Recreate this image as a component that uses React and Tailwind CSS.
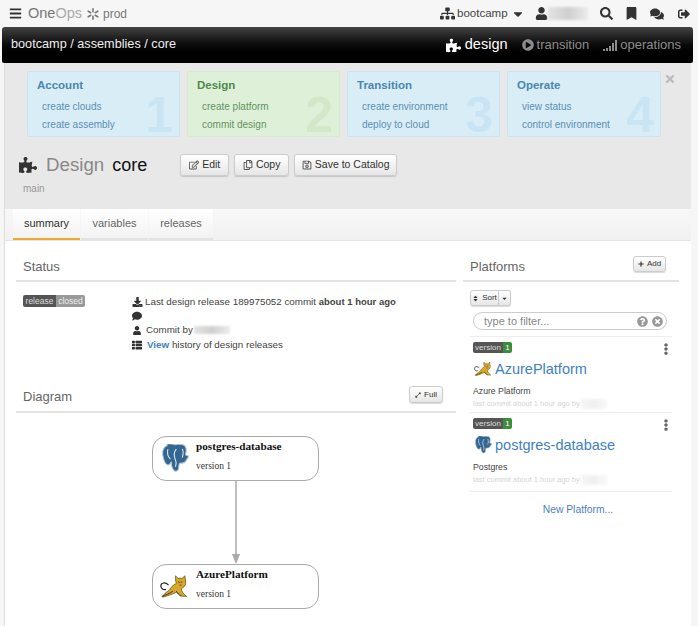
import {
  FaBars, FaSitemap, FaCaretDown, FaUser, FaSearch, FaBookmark, FaComments, FaSignOutAlt,
  FaPuzzlePiece, FaPlayCircle, FaTimes, FaRegEdit, FaRegCopy, FaRegSave, FaDownload, FaComment,
  FaThList, FaPlus, FaSort, FaExpandAlt, FaTimesCircle, FaQuestionCircle, FaEllipsisV,
} from "react-icons/fa";

const steps = [
  { title: "Account", num: "1", links: ["create clouds", "create assembly"], x: "w-[153px]" },
  { title: "Design", num: "2", links: ["create platform", "commit design"], green: true, x: "w-[153px]" },
  { title: "Transition", num: "3", links: ["create environment", "deploy to cloud"], x: "w-[153px]" },
  { title: "Operate", num: "4", links: ["view status", "control environment"], x: "w-[154px]" },
];

function Blur({ className = "" }) {
  return (
    <span className={`inline-block bg-gradient-to-r from-[#e4e4e4] via-[#cfcfcf] to-[#ececec] blur-[1px] ${className}`} />
  );
}

function Signal() {
  return (
    <svg width="15" height="12" viewBox="0 0 15 12" fill="currentColor">
      <rect x="0" y="10" width="2" height="2" />
      <rect x="3" y="9" width="2" height="3" />
      <rect x="6" y="7" width="2" height="5" />
      <rect x="9" y="4" width="2" height="8" />
      <rect x="12" y="1" width="2" height="11" />
    </svg>
  );
}

function Spinner() {
  return (
    <svg width="12" height="12" viewBox="0 0 12 12" stroke="#777" strokeWidth="1.6" strokeLinecap="round">
      <path d="M6 .8v3M6 8.2v3M1.2 3.2l2.6 1.5M8.2 7.3l2.6 1.5M1.2 8.8l2.6-1.5M8.2 4.7l2.6-1.5" />
    </svg>
  );
}

function Elephant({ size = 18 }) {
  return (
    <svg width={size} height={size * 1.06} viewBox="0 0 32 34">
      <path d="M6 2C2 3 0 8 1 14c1 6 3 10 6 11 2 0 3-2 4-4 0 4 1 9 4 11 3 1 5-1 5-5 0-2 0-3 1-4 3 0 7-1 8-4 1-2 3-3 2-5-2 0-3 0-3-2 1-4 2-9-3-11-4-1-7-1-9 0-3-1-7-2-10-1z" fill="#336791" stroke="#b9c6d2" strokeWidth="1.2" />
      <path d="M7 6c-1 4 0 9 3 12M17 6c-3 3-3 8-1 13 1 2 1 5 0 8M24 6c2 3 1 7 0 10" fill="none" stroke="#dfe7ee" strokeWidth="1.3" />
    </svg>
  );
}

function Tomcat({ size = 20 }) {
  return (
    <svg width={size} height={size * 0.8} viewBox="0 0 35 28">
      <path d="M10 13C6 9 1 10 1 14c0 3 3 5 6 4" fill="none" stroke="#222" strokeWidth="1.4" />
      <path d="M18 2l3 3h5l3-3 1 8c0 4-3 6-5 7 0 3 2 6 6 9h-5c-3-2-5-4-7-5-3 2-8 4-16 6 1-3 4-6 8-8 1-3 4-6 8-8-1-3-1-6-1-9z" fill="#d9a72a" stroke="#5a4310" strokeWidth="0.8" />
      <path d="M2 26c4-1 9-3 13-6M25 26c-3-1-5-4-6-6" fill="none" stroke="#222" strokeWidth="1" />
      <path d="M21 9l2 1M26 9l-2 1M23 13h2" fill="none" stroke="#333" strokeWidth="1" />
    </svg>
  );
}

function Btn({ icon, children, className = "" }) {
  return (
    <button className={`flex items-center justify-center gap-[3px] rounded-[3px] border border-[#ccc] bg-gradient-to-b from-white to-[#e6e6e6] text-[#333] shadow-[0_1px_1px_rgba(0,0,0,0.15)] ${className}`}>
      {icon}
      {children}
    </button>
  );
}

function Heading({ children, action }) {
  return (
    <div className="flex h-[34px] items-center justify-between border-b-2 border-[#e3e3e3] pr-[13px] pl-[7px] text-[13px] leading-none text-[#666]">
      <span className="pt-[4px]">{children}</span>
      {action}
    </div>
  );
}

function Platform({ icon, name, desc, className = "h-[71px]" }) {
  return (
    <div className={`relative border-b border-[#eee] pl-[3px] ${className}`}>
      <div className="flex h-[11px] w-[39px] overflow-hidden rounded-[2px] text-[8px] leading-[11px] text-[#ddd]">
        <span className="w-[30px] bg-[#555] text-center">version</span>
        <span className="flex-1 bg-[#3d8b3d] text-center text-white">1</span>
      </div>
      <FaEllipsisV className="absolute top-[1px] right-0 text-[12px] text-[#666]" />
      <div className="mt-[6px] flex h-[20px] items-center gap-[2px]">
        <span className="flex w-[20px] justify-center">{icon}</span>
        <span className="text-[14.5px] leading-none text-[#3f7fc4]">{name}</span>
      </div>
      <div className="mt-[6px] text-[8.7px] leading-[12px] text-[#444]">{desc}</div>
      <div className="mt-[1px] flex items-center gap-[1px] text-[7.5px] leading-[12px] text-[#d4d4d4]">
        last commit about 1 hour ago by
        <Blur className="h-[10px] w-[26px] opacity-30" />
      </div>
    </div>
  );
}

function Node({ icon, name }) {
  return (
    <div className="flex h-[45px] w-[167px] rounded-[14px] border border-[#aaa] bg-white font-['Liberation_Serif',serif]">
      <span className="flex w-[43px] items-center justify-center pl-[1px]">{icon}</span>
      <div className="pt-[2px]">
        <div className="text-[11.2px] leading-[14px] font-bold text-[#111]">{name}</div>
        <div className="mt-[7px] text-[9.5px] leading-[12px] text-[#333]">version 1</div>
      </div>
    </div>
  );
}

export default function App() {
  return (
    <div className="h-[626px] w-[698px] overflow-hidden bg-[#f6f6f6] font-['Liberation_Sans',sans-serif]">
      {/* Top bar */}
      <div className="flex h-[27px] items-center text-[#333]">
        <FaBars className="ml-[9px] text-[13px]" />
        <span className="ml-[6px] text-[14.5px] leading-none text-[#777]">
          One<span className="text-[#aaa]">Ops</span>
        </span>
        <span className="ml-[5px]"><Spinner /></span>
        <span className="ml-[4px] text-[12px] text-[#777]">prod</span>
        <FaSitemap className="ml-[313px] text-[15px]" />
        <span className="ml-[2px] text-[11.5px] text-[#444]">bootcamp</span>
        <FaCaretDown className="ml-[3px] text-[14px]" />
        <FaUser className="ml-[10px] text-[13px]" />
        <Blur className="h-[13px] w-[40px]" />
        <FaSearch className="ml-[12px] text-[13px]" />
        <FaBookmark className="ml-[12px] text-[13px]" />
        <FaComments className="ml-[12px] text-[14px]" />
        <FaSignOutAlt className="ml-[14px] text-[12px]" />
      </div>

      {/* Black bar */}
      <div className="mx-[2px] flex h-[36px] w-[691px] items-center rounded-t-[3px] rounded-b-[2px] bg-gradient-to-b from-[#444] via-[#0a0a0a] to-black pr-[12px] pl-[9px] text-[13px] text-white">
        <span className="text-[12.7px] text-[#eee]">bootcamp / assemblies / core</span>
        <span className="ml-auto flex items-center gap-[4px] text-[14.5px]">
          <FaPuzzlePiece className="text-[15px]" />
          design
        </span>
        <span className="ml-[14px] flex items-center gap-[3px] text-[#8c8c8c]">
          <FaPlayCircle className="text-[12px]" />
          transition
        </span>
        <span className="ml-[14px] flex items-center gap-[2px] text-[#8c8c8c]">
          <Signal />
          operations
        </span>
      </div>

      {/* Main panel */}
      <div className="ml-[4px] h-[563px] w-[687px] border-l border-[#ddd]">
        <div className="relative h-[146px] bg-[#e8e8e8]">
          <div className="flex gap-[7px] pt-[8px] pl-[22px]">
            {steps.map((s) => (
              <div
                key={s.title}
                className={`relative h-[66px] rounded-[2px] border ${s.x} ${
                  s.green ? "border-[#d8ebcf] bg-[#dff0d8] text-[#4f8a4f]" : "border-[#c9e4f2] bg-[#d9edf7] text-[#4a87ad]"
                }`}
              >
                <span className={`absolute right-[6px] bottom-[-4px] text-[50px] leading-none font-bold ${s.green ? "text-[#d2e8c9]" : "text-[#c9e5f4]"}`}>
                  {s.num}
                </span>
                <div className="relative pt-[6px] pl-[9px] text-[11.5px] leading-[14px] font-bold">{s.title}</div>
                <div className={`relative pt-[6px] pl-[14px] text-[10px] leading-[18px] ${s.green ? "text-[#5f9460]" : "text-[#5a8fb3]"}`}>
                  {s.links.map((l) => (
                    <div key={l}>{l}</div>
                  ))}
                </div>
              </div>
            ))}
          </div>
          <FaTimes className="absolute top-[10px] right-[15px] text-[12px] text-[#bbb]" />

          <div className="mt-[17px] flex items-center pl-[14px]">
            <FaPuzzlePiece className="text-[18px] text-[#333]" />
            <span className="ml-[9px] text-[18.7px] leading-[22px] text-[#888]">Design</span>
            <span className="ml-[8px] text-[18px] leading-[22px] text-[#111]">core</span>
            <div className="ml-[33px] flex gap-[5px] text-[10.5px]">
              <Btn className="h-[22px] w-[49px]" icon={<FaRegEdit className="text-[10px] text-[#555]" />}>Edit</Btn>
              <Btn className="h-[22px] w-[55px]" icon={<FaRegCopy className="text-[10px] text-[#555]" />}>Copy</Btn>
              <Btn className="h-[22px] w-[103px]" icon={<FaRegSave className="text-[10px] text-[#555]" />}>Save to Catalog</Btn>
            </div>
          </div>
          <div className="mt-[7px] pl-[18px] text-[10px] leading-[12px] text-[#999]">main</div>
        </div>

        {/* Tabs */}
        <div className="flex h-[32px] border-b border-[#e4e4e4] bg-gradient-to-b from-[#f8f8f8] to-[#f1f1f1] pl-[8px] text-[11px]">
          <div className="flex h-[31px] w-[67px] items-center justify-center border-b-2 border-[#f5a72c] bg-gradient-to-b from-white to-[#f3f3f3] text-[#333]">summary</div>
          <div className="ml-[1px] flex h-[31px] w-[67px] items-center justify-center border-b-2 border-[#e3e3e3] bg-gradient-to-b from-white to-[#f3f3f3] text-[#666]">variables</div>
          <div className="ml-[1px] flex h-[31px] w-[64px] items-center justify-center border-b-2 border-[#e3e3e3] bg-gradient-to-b from-white to-[#f3f3f3] text-[#666]">releases</div>
        </div>

        {/* Content */}
        <div className="flex h-[385px] bg-white pt-[7px] pl-[11px]">
          <div className="w-[440px]">
            <Heading>Status</Heading>
            <div className="flex pt-[13px] pl-[7px]">
              <div className="flex h-[12px] w-[62px] overflow-hidden rounded-[2px] text-[8.5px] leading-[12px] text-[#ddd]">
                <span className="w-[33px] bg-[#555] text-center">release</span>
                <span className="flex-1 bg-[#999] text-center text-[#eee]">closed</span>
              </div>
              <div className="ml-[47px] text-[9.8px] leading-[14.3px] text-[#444]">
                <div className="flex items-center gap-[2px]">
                  <FaDownload className="w-[11px] text-[10px] text-[#333]" />
                  <span>Last design release 189975052 commit <b className="text-[9.5px] font-bold">about 1 hour ago</b></span>
                </div>
                <div className="flex h-[14px] items-center"><FaComment className="text-[10px] text-[#333]" /></div>
                <div className="flex items-center gap-[4px]">
                  <FaUser className="w-[10px] text-[9px] text-[#333]" />
                  Commit by
                  <Blur className="-ml-[3px] h-[8px] w-[36px]" />
                </div>
                <div className="flex items-center gap-[5px]">
                  <FaThList className="text-[10px] text-[#333]" />
                  <span><b className="font-bold text-[#3f7fc4]">View</b> history of design releases</span>
                </div>
              </div>
            </div>
            <div className="mt-[27px]">
              <Heading
                action={
                  <Btn className="h-[17px] w-[34px] text-[8px]" icon={<FaExpandAlt className="text-[6px]" />}>Full</Btn>
                }
              >
                Diagram
              </Heading>
            </div>
            {/* Diagram */}
            <div className="flex flex-col items-start pt-[23px] pl-[136px]">
              <Node icon={<Elephant size={27} />} name="postgres-database" />
              <svg className="ml-[79px]" width="10" height="83" viewBox="0 0 10 83">
                <path d="M5 0v76" stroke="#aaa" strokeWidth="1.5" />
                <path d="M1 73h8l-4 10z" fill="#aaa" />
              </svg>
              <Node icon={<Tomcat size={30} />} name="AzurePlatform" />
            </div>
          </div>

          <div className="ml-[7px] w-[216px]">
            <Heading
              action={
                <Btn className="h-[16px] w-[33px] text-[8px]" icon={<FaPlus className="text-[6px]" />}>Add</Btn>
              }
            >
              Platforms
            </Heading>
            <div className="pl-[7px]">
              <div className="mt-[8px] flex h-[16px] text-[8px] text-[#333]">
                <Btn className="w-[29px] rounded-r-none" icon={<FaSort className="text-[7px]" />}>Sort</Btn>
                <Btn className="w-[12px] rounded-l-none border-l-0" icon={<FaCaretDown className="text-[7px]" />} />
              </div>
              <div className="mt-[6px] ml-[3px] flex h-[18px] w-[194px] items-center rounded-full border border-[#ccc] bg-white pr-[3px] pl-[10px] text-[11px] text-[#888]">
                type to filter...
                <span className="ml-auto flex items-center gap-[4px] text-[11px] text-[#999]">
                  <FaQuestionCircle />
                  <FaTimesCircle />
                </span>
              </div>
              <div className="mt-[6px] w-[202px]">
                <div className="border-t border-[#eee] pt-[5px]">
                  <Platform icon={<Tomcat size={19} />} name="AzurePlatform" desc="Azure Platform" />
                </div>
                <div className="pt-[5px]">
                  <Platform icon={<Elephant size={17} />} name="postgres-database" desc="Postgres" className="h-[74px]" />
                </div>
                <div className="mt-[11px] pl-[14px] text-center text-[10.3px] leading-[13px] text-[#4a7fc4]">New Platform...</div>
              </div>
            </div>
          </div>
        </div>
      </div>
    </div>
  );
}
